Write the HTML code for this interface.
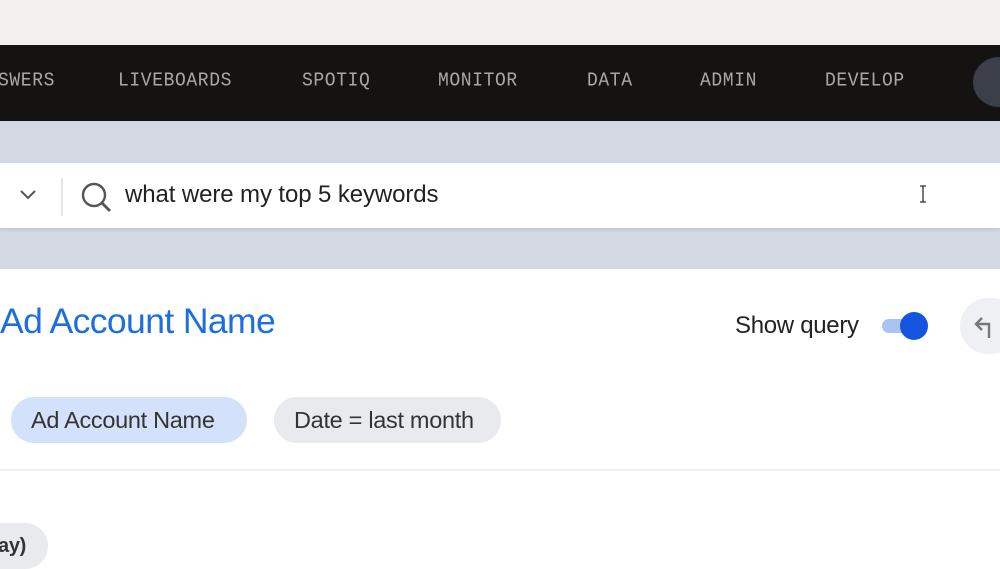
<!DOCTYPE html>
<html><head><style>
*{margin:0;padding:0;box-sizing:border-box}
body{width:1000px;height:563px;overflow:hidden;background:#fff;font-family:"Liberation Sans",sans-serif;position:relative}
.top{position:absolute;left:0;top:0;width:1000px;height:45px;background:#f2f0ec}
.nav{position:absolute;left:0;top:45px;width:1000px;height:76px;background:#151311}
.nav span{position:absolute;top:26px;font-family:"Liberation Mono",monospace;font-size:18px;color:#a9a9a9;letter-spacing:0.6px;transform:scaleY(1.1)}
.av{position:absolute;left:973px;top:57px;width:52px;height:50px;border-radius:50%;background:#3a3f4a}
.band{position:absolute;left:0;top:121px;width:1000px;height:148px;background:#d3d8e2}
.search{position:absolute;left:0;top:163px;width:1000px;height:65px;background:#fff;box-shadow:0 2px 3px rgba(0,0,0,.08)}
.q{position:absolute;left:125px;top:181px;font-size:24px;color:#222;letter-spacing:-0.1px}
.h{position:absolute;left:0;top:301px;font-size:35.5px;color:#1f6ee0;letter-spacing:-0.6px}
.sq{position:absolute;left:735px;top:312px;font-size:24px;color:#222;letter-spacing:-0.3px}
.chip{position:absolute;top:397px;height:46px;border-radius:23px;font-size:23.5px;color:#333;line-height:46px;padding:0 20px;letter-spacing:-0.3px}
</style></head><body>
<div class="top"></div>
<div class="nav">
<span style="left:-2px">SWERS</span>
<span style="left:118px">LIVEBOARDS</span>
<span style="left:302px">SPOTIQ</span>
<span style="left:438px">MONITOR</span>
<span style="left:587px">DATA</span>
<span style="left:700px">ADMIN</span>
<span style="left:825px">DEVELOP</span>
</div>
<div class="av"></div>
<div class="band"></div>
<div class="search"></div>
<svg style="position:absolute;left:0;top:176px" width="130" height="44">
<path d="M21 15 l7 7 l7 -7" stroke="#555" stroke-width="2" fill="none"/>
<line x1="62" y1="2" x2="62" y2="40" stroke="#ddd" stroke-width="1.5"/>
<circle cx="94" cy="19" r="11" stroke="#555" stroke-width="2.4" fill="none"/>
<line x1="102" y1="27" x2="110" y2="35" stroke="#555" stroke-width="2.8"/>
</svg>
<div class="q">what were my top 5 keywords</div>
<svg style="position:absolute;left:918px;top:185px" width="10" height="18"><path d="M2 1h6M5 1v16M2 17h6" stroke="#333" stroke-width="1.3" fill="none"/></svg>
<div class="h">Ad Account Name</div>
<div class="sq">Show query</div>
<div style="position:absolute;left:882px;top:319px;width:40px;height:14px;border-radius:7px;background:#a9c4f3"></div>
<div style="position:absolute;left:900px;top:312px;width:28px;height:28px;border-radius:50%;background:#1554dc"></div>
<div style="position:absolute;left:960px;top:298px;width:60px;height:56px;border-radius:28px;background:#eef0f3"></div>
<svg style="position:absolute;left:972px;top:312px" width="28" height="28"><path d="M10 6 L4 12 L10 18 M4 12 H17 V26" stroke="#777" stroke-width="2.4" fill="none"/></svg>
<div class="chip" style="left:11px;width:236px;background:#d3e2fa">Ad Account Name</div>
<div class="chip" style="left:274px;width:227px;background:#e8eaee">Date = last month</div>
<div style="position:absolute;left:0;top:469px;width:1000px;height:2px;background:#f0f0f2"></div>
<div class="chip" style="left:-40px;top:523px;width:88px;padding:0;padding-left:38px;background:#e8eaee;font-weight:bold;font-size:20px">ay)</div>
</body></html>
